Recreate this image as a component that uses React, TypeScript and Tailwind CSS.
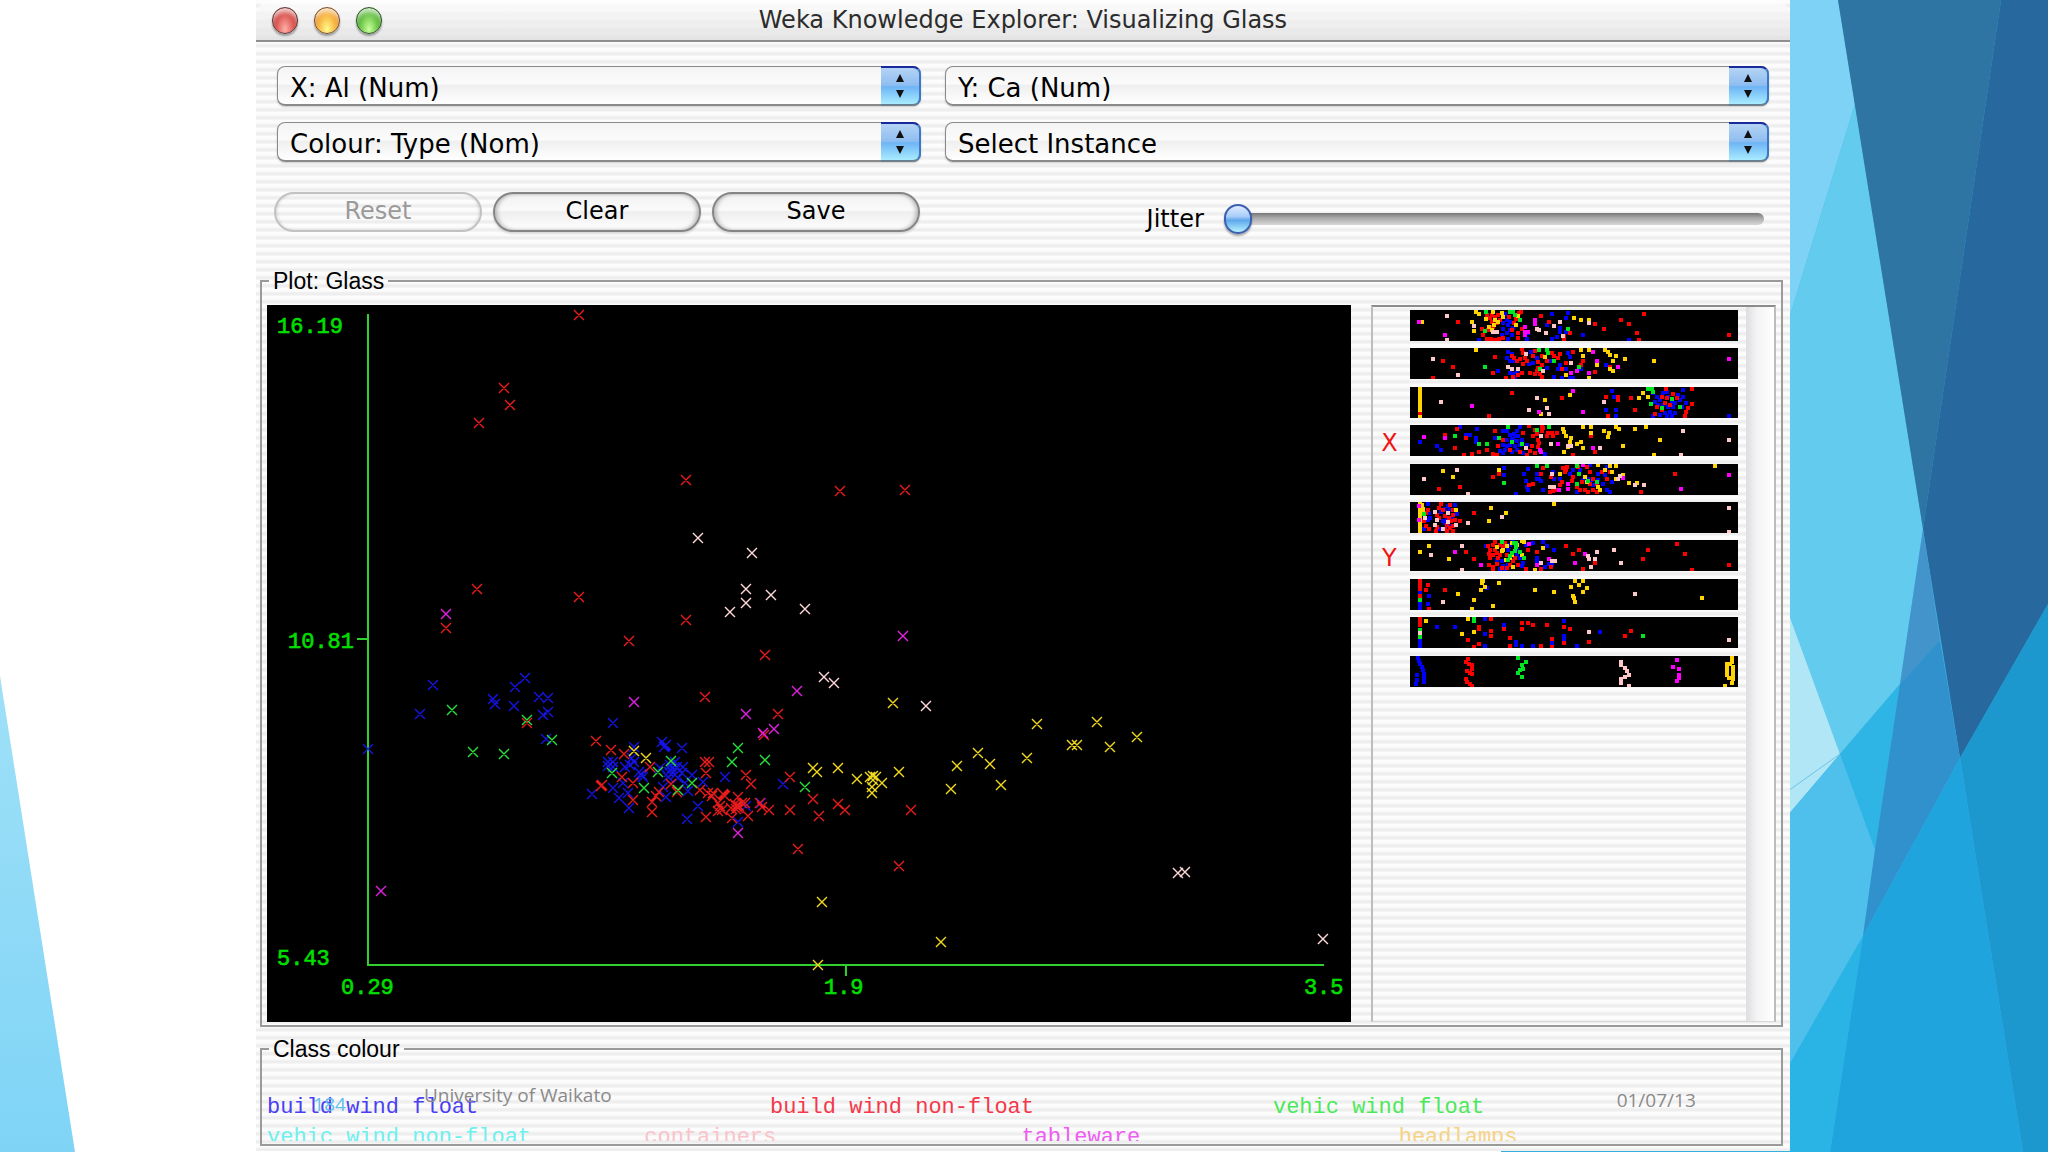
import React from "react";

type Series = { color: string; points: string };

const RED = "#e81c1c";
const BLUE = "#1414e6";
const GREEN = "#28e03c";
const MAGENTA = "#e022e0";
const YELLOW = "#f0d820";
const PINK = "#ffd8d8";

// scatter plot: Al on x, Ca on y
const plotSeries: Series[] = [
  {
    color: BLUE,
    points:
      "368,749 433,685 420,714 493,699 495,704 514,706 525,678 515,687 539,697 548,698 548,712 543,715 546,739 613,723 608,762 613,762 608,766 613,767 634,747 632,758 634,762 630,765 625,767 662,742 665,746 666,745 664,747 682,748 642,775 641,774 639,772 643,777 592,794 613,788 619,798 623,783 629,808 628,793 677,767 670,765 682,773 683,767 692,775 673,773 668,777 678,778 685,783 688,791 663,787 666,797 660,768 675,762 698,806 687,819 725,777 703,782 738,822 783,784 761,803 746,806 671,770 672,768 669,772 675,775",
  },
  {
    color: RED,
    points:
      "579,315 504,388 510,405 479,423 686,480 477,589 579,597 446,628 686,620 629,641 765,655 705,697 840,491 905,490 813,799 838,804 845,810 819,816 911,810 778,714 764,735 596,741 611,750 624,754 650,767 622,777 601,786 602,785 633,783 671,784 659,792 656,796 652,802 633,800 652,812 677,792 705,762 709,762 706,773 700,790 708,793 713,793 712,796 724,795 725,796 723,794 720,806 718,811 722,810 718,803 706,817 738,797 746,775 751,784 737,807 735,804 739,806 736,809 742,803 731,808 737,806 738,808 736,806 732,818 748,816 745,803 760,803 769,810 762,807 790,777 790,810 798,849 899,866 527,723",
  },
  {
    color: GREEN,
    points:
      "452,710 527,720 473,752 504,754 552,740 612,773 644,788 671,761 658,772 692,783 678,790 738,748 732,762 765,760 805,787",
  },
  {
    color: YELLOW,
    points:
      "893,703 1037,724 1097,722 1137,737 1110,747 1072,745 1077,745 1027,758 978,753 990,764 957,766 951,789 1001,785 899,772 857,779 870,777 876,777 873,780 873,776 882,783 872,787 872,793 813,768 817,772 838,768 822,902 941,942 818,965 634,751 646,758",
  },
  {
    color: MAGENTA,
    points: "446,614 634,702 797,691 903,636 746,714 774,729 763,733 738,833 381,891",
  },
  {
    color: PINK,
    points:
      "698,538 752,553 746,589 746,603 771,595 730,612 805,609 824,677 834,683 926,706 1178,873 1185,872 1323,939",
  },
];

// one entry per attribute, drawn top to bottom
const attributeBars: { label?: string; series: Series[] }[] = [
  {
    series: [
      { color: "#0000ff", points: "142,4 158,3 156,8 150,18 150,22 156,22 173,25 219,30 142,29 147,27 137,15 118,23 117,29 97,10 93,13 98,15 100,20 97,23 93,19 92,25 102,25 100,12 95,4 98,29 103,18 69,30" },
      { color: "#ff0000", points: "48,12 131,6 139,12 185,14 194,19 211,10 219,14 227,23 229,30 234,4 319,25 160,23 154,29 154,26 72,19 73,25 77,29 81,29 85,30 89,29 77,5 80,8 82,5 85,7 88,5 90,10 87,13 82,12 78,20 83,17 104,13 106,9 109,3 111,2 108,23 108,28 112,19 102,20 99,7 93,28" },
      { color: "#ffd400", points: "12,12 66,2 69,4 62,12 64,21 83,2 92,3 76,9 85,10 79,17 84,15 82,20 164,8 171,10 179,10 108,6 106,15 88,12 93,7" },
      { color: "#00e620", points: "76,2 75,21 100,2 103,2 105,5 110,10 158,19" },
      { color: "#ff00ff", points: "35,25 9,12 125,10 125,14 115,17 115,22 118,22 115,25" },
      { color: "#ffc8c8", points: "37,6 37,30 64,16 150,12 144,16 136,23 127,19 129,20 179,13 83,22 87,22 153,26" },
    ],
  },
  {
    series: [
      { color: "#0000ff", points: "98,4 97,10 100,13 102,6 104,13 88,23 100,25 103,26 107,24 119,16 121,4 123,15 127,10 137,20 141,13 144,29 148,21 150,17 158,5 160,9 156,21 160,30 163,30 171,21 196,17 105,30 152,30" },
      { color: "#ff0000", points: "33,13 43,19 85,9 83,25 23,30 150,6 148,10 144,8 152,21 156,15 171,17 173,13 200,19 185,24 163,4 112,1 113,5 110,11 113,16 107,13 102,8 104,10 117,13 123,8 125,3 128,14 132,17 127,23 130,26 132,29 125,26 128,20 112,25 108,27 96,30 103,29 120,25 115,10 137,13 142,5 132,8" },
      { color: "#ffd400", points: "66,2 171,2 179,2 195,2 198,4 200,7 206,8 203,13 215,11 244,13 187,17 200,21 203,23 179,30 173,8 156,27 135,9" },
      { color: "#00e620", points: "75,19 137,2 138,5 129,2 144,13 130,21 169,19" },
      { color: "#ff00ff", points: "183,4 187,13 179,25 208,19 319,11 161,25 167,23" },
      { color: "#ffc8c8", points: "23,11 48,27 98,19 102,21 108,21 161,15 133,23 116,6" },
    ],
  },
  {
    series: [
      { color: "#0000ff", points: "202,4 204,10 206,23 196,23 206,29 319,29 243,6 247,10 245,15 250,13 253,6 257,5 258,10 248,18 253,18 262,15 265,16 270,13 273,10 273,3 258,20 263,20 260,25 255,26 250,28 257,29 262,29 265,26 243,29 272,20 276,16 268,8" },
      { color: "#ff0000", points: "10,26 102,6 152,11 79,29 196,10 208,10 208,13 221,11 225,23 198,29 282,2 282,17 278,21 276,25 275,29 256,2 252,10 255,16 260,18 247,20 257,11 245,27 252,23 263,7 267,11" },
      { color: "#ffd400", points: "10,2 10,5 10,8 10,11 10,14 10,17 10,20 10,23 10,30 160,8 135,13 131,27 233,6 229,11 238,10" },
      { color: "#00e620", points: "238,2 242,2 243,5 241,17 252,21 262,12 270,20" },
      { color: "#ff00ff", points: "62,19 163,4 129,25 173,25" },
      { color: "#ffc8c8", points: "31,15 127,11 119,23 137,21 139,27 194,15" },
    ],
  },
  {
    label: "X",
    series: [
      { color: "#0000ff", points: "50,2 67,4 60,10 56,10 66,13 66,17 10,17 27,21 31,25 85,13 93,6 97,6 100,10 97,15 102,14 105,11 107,6 108,11 107,16 110,20 105,21 100,20 97,21 93,20 95,25 107,25 102,27 112,15 110,2 93,28 113,28 90,26 117,20 135,29 104,9 103,15" },
      { color: "#ff0000", points: "47,4 35,10 56,13 45,23 54,30 62,29 69,27 77,25 85,6 83,29 87,30 93,15 88,21 181,11 185,27 163,30 125,5 127,9 132,6 133,3 138,8 142,8 147,8 143,11 128,15 129,18 128,22 123,11 122,21 120,26 125,28 117,30 132,2 119,1 100,25 113,8 110,27 137,11" },
      { color: "#ffd400", points: "173,2 181,2 181,8 194,6 206,2 209,4 225,4 236,2 199,8 198,12 250,15 213,21 244,30 154,7 156,11 161,13 160,17 167,19 171,17 173,23 154,27 153,4 158,22" },
      { color: "#00e620", points: "45,11 69,19 77,19 98,2 139,2 89,13 102,17 112,19 127,5" },
      { color: "#ff00ff", points: "14,12 35,13 148,19 130,25 131,27 183,23" },
      { color: "#ffc8c8", points: "273,6 319,15 271,30 141,19 116,23 131,11 158,21 161,21 190,23" },
    ],
  },
  {
    series: [
      { color: "#0000ff", points: "94,4 94,11 127,10 114,10 118,5 116,17 129,15 131,17 133,26 118,26 106,30 117,23 127,15 144,15 150,15 160,10 163,6 170,6 173,16 178,15 182,16 180,1 188,10 188,16 193,20 197,26 195,11 200,28 183,21 167,28 202,18 197,3 143,8" },
      { color: "#ff0000", points: "29,25 50,23 83,13 89,10 133,4 131,10 265,10 231,28 141,13 153,4 157,3 156,6 152,18 150,21 147,26 143,27 140,28 163,13 162,17 167,23 170,26 175,26 178,28 172,18 177,3 180,8 183,15 187,20 180,20 183,26 192,8 197,15 200,8 168,3 123,20 119,21 155,8 187,28" },
      { color: "#ffd400", points: "33,7 43,13 89,6 305,2 188,1 195,6 200,2 206,2 202,8 213,11 219,19 227,19 206,15 188,23 190,26 150,10 175,13 177,18" },
      { color: "#00e620", points: "94,19 127,2 137,2 167,2 169,10 167,20 178,17 187,18" },
      { color: "#ff00ff", points: "319,11 271,25 158,25 149,26 213,14 173,1 158,20" },
      { color: "#ffc8c8", points: "14,15 47,6 58,30 142,10 234,21 210,12 225,21 140,23 144,23 208,15" },
    ],
  },
  {
    series: [
      { color: "#0000ff", points: "18,2 19,11 18,18 20,16 38,4 35,7 40,8 33,19 31,10 37,17 42,16 47,12 35,21 39,24 14,27 29,27 45,3" },
      { color: "#ff0000", points: "64,11 50,19 16,11 18,8 14,19 16,24 19,27 31,2 29,6 27,13 29,16 35,14 40,3 43,8 39,16 43,13 45,18 41,19 37,23 35,27 40,26 43,24 43,29 26,29 27,25 37,29 33,8" },
      { color: "#ffd400", points: "10,2 10,6 13,10 10,10 10,14 10,18 10,22 10,26 10,29 12,3 13,7 46,8 81,6 96,11 79,19 144,2" },
      { color: "#00e620", points: "14,12" },
      { color: "#ff00ff", points: "9,4 9,18" },
      { color: "#ffc8c8", points: "92,15 58,21 319,6 319,30 25,10 27,18 25,23 38,11 38,20 46,23 15,16 33,27" },
    ],
  },
  {
    label: "Y",
    series: [
      { color: "#0000ff", points: "76,6 133,2 137,6 144,10 127,18 127,21 139,24 135,27 142,25 123,3 116,5 87,20 92,21 98,25 93,26 100,5 107,10 110,18 112,26 90,29 107,15 113,23 98,10 103,2 95,29" },
      { color: "#ff0000", points: "56,12 64,19 156,6 163,14 169,10 238,10 233,19 267,4 275,14 282,30 319,25 173,29 185,23 116,29 131,29 118,10 127,12 141,27 78,6 80,10 79,14 80,18 83,5 85,10 83,15 87,13 90,15 88,18 85,2 90,5 93,7 79,25 83,27 87,24 92,28 97,28 100,25 105,18 108,25 97,15 95,3 83,29 103,21" },
      { color: "#ffd400", points: "19,6 10,12 39,19 133,8 112,1 114,2 102,3 93,10 97,6 96,20 102,15 100,18 103,27 92,11 107,5 112,15 125,30 87,7" },
      { color: "#00e620", points: "92,2 104,3 106,7 105,11 102,13 110,12 100,16 114,18 98,20 106,3" },
      { color: "#ff00ff", points: "45,12 71,25 119,4 165,23 175,14 139,19 127,25" },
      { color: "#ffc8c8", points: "52,6 21,15 52,30 204,10 211,23 187,12 185,19 179,19 181,27 131,23 142,21 145,21 178,16" },
    ],
  },
  {
    series: [
      { color: "#0000ff", points: "10,14 10,25 10,29 19,17 18,25 77,9" },
      { color: "#ff0000", points: "10,2 10,6 10,10 10,17 18,6 16,11 35,11 19,30" },
      { color: "#ffd400", points: "72,2 72,4 73,2 75,8 71,11 89,4 48,15 64,21 83,27 62,30 125,11 144,13 165,2 173,2 169,6 161,8 177,9 173,13 163,17 164,19 165,23 292,19" },
      { color: "#00e620", points: "10,21" },
      { color: "#ffc8c8", points: "33,23 225,15" },
    ],
  },
  {
    series: [
      { color: "#0000ff", points: "10,23 10,26 10,30 27,10 45,10 75,2 75,17 94,8 75,29 106,25 106,28 112,29 123,29 142,26 154,4 154,19 154,22 167,29 190,15" },
      { color: "#ff0000", points: "10,2 10,6 10,8 10,19 81,2 69,10 69,12 81,14 81,19 58,23 100,21 100,29 69,27 64,30 94,12 112,6 118,6 112,12 123,8 137,8 154,10 160,12 131,29 142,22 142,30 179,25 215,19 221,14 154,26" },
      { color: "#ffd400", points: "16,4 58,2 52,17 64,15" },
      { color: "#00e620", points: "10,13 10,20 64,2 64,4 233,19" },
      { color: "#ffc8c8", points: "10,16 179,15 319,23" },
    ],
  },
  {
    series: [
      { color: "#0000ff", points: "8,2 9,5 10,8 12,11 13,14 14,18 14,22 14,26 7,19 7,24 6,28" },
      { color: "#ff0000", points: "58,3 56,6 59,8 62,9 62,13 57,15 60,17 62,18 56,23 57,26 60,28 62,30" },
      { color: "#ffd400", points: "322,2 322,6 320,8 323,11 323,15 323,19 323,23 322,27 317,8 317,11 317,15 317,19 319,22 315,30" },
      { color: "#00e620", points: "108,2 116,6 112,9 113,13 110,14 108,17 112,21" },
      { color: "#ff00ff", points: "267,4 263,11 269,13 269,19 269,22 267,25" },
      { color: "#ffc8c8", points: "211,6 211,9 215,12 217,15 219,19 215,21 211,23 211,27 219,30" },
    ],
  },
];

const crossPath = (points: string) =>
  points
    .split(" ")
    .map((p) => {
      const [x, y] = p.split(",").map(Number);
      return `M${x - 5} ${y - 5}l10 10M${x - 5} ${y + 5}l10 -10`;
    })
    .join("");

const squarePath = (points: string) =>
  points
    .split(" ")
    .map((p) => {
      const [x, y] = p.split(",").map(Number);
      return `M${x - 2} ${y - 2}h4v4h-4z`;
    })
    .join("");

const SlideBackground = () => (
  <svg
    className="absolute inset-0 h-full w-full"
    viewBox="0 0 2048 1152"
    preserveAspectRatio="none"
    aria-hidden="true"
  >
    <defs>
      <linearGradient id="wedge" x1="0" y1="0" x2="0" y2="1">
        <stop offset="0" stopColor="#9fe0f8" />
        <stop offset="1" stopColor="#7fd4f6" />
      </linearGradient>
    </defs>
    <polygon points="0,676 75,1152 0,1152" fill="url(#wedge)" />
    <polygon points="1501,1149 1790,1149 1790,1152 1501,1152" fill="#35b0dc" />
    <rect x="1788" y="0" width="260" height="1152" fill="#3fb4e4" />
    <polygon points="1788,0 1838,0 1855,104 1788,322" fill="#7dd2f5" />
    <polygon points="1855,104 1923,529 1900,684 1840,754 1788,612 1788,322" fill="#63cbee" />
    <polygon points="1788,612 1840,754 1788,815" fill="#b1e6f7" />
    <path d="M1788 791L1840 754" stroke="#6cc6e2" strokeWidth="1" />
    <polygon points="1840,754 1900,684 1875,850" fill="#2eb5e6" />
    <polygon points="1788,815 1840,754 1875,850 1863,936 1788,1067" fill="#4fc0ec" />
    <polygon points="1838,0 2001,0 1923,529" fill="#2f75a3" />
    <polygon points="2001,0 2048,0 2048,604 1960,758 1923,529" fill="#27699e" />
    <polygon points="1923,529 1940,640 1900,684" fill="#4494cc" />
    <polygon points="1940,640 1960,758 1863,936 1875,850 1900,684" fill="#3191cd" />
    <polygon points="2048,604 2048,1152 2023,1152 1960,758" fill="#1d98ce" />
    <polygon points="1960,758 2023,1152 1830,1152 1863,936" fill="#20a4de" />
    <polygon points="1863,936 1830,1152 1788,1152 1788,1067" fill="#2ab4e6" />
  </svg>
);

const TitleBar = () => (
  <header className="grid h-[42px] grid-cols-[1fr_auto_1fr] items-center rounded-t-2xl border-b-2 border-[#8e8e8e] bg-[linear-gradient(to_bottom,#ffffffcc,#dfe0dfcc)] px-4">
    <div className="flex gap-4">
      <button
        aria-label="Close"
        className="h-[27px] w-[26px] rounded-full border border-[#5c3a3a] bg-[radial-gradient(ellipse_at_50%_85%,#ffb0a8,#dd5a55_50%,#a83232)] shadow-[inset_0_5px_4px_-1px_#ffffffbb,0_2px_2px_#0005]"
      />
      <button
        aria-label="Minimize"
        className="h-[27px] w-[26px] rounded-full border border-[#7a5130] bg-[radial-gradient(ellipse_at_50%_85%,#fffb8c,#f6ae3c_55%,#c9681d)] shadow-[inset_0_5px_4px_-1px_#ffffffbb,0_2px_2px_#0005]"
      />
      <button
        aria-label="Zoom"
        className="h-[27px] w-[26px] rounded-full border border-[#2f5526] bg-[radial-gradient(ellipse_at_50%_85%,#c9ff9a,#66c043_55%,#2f8420)] shadow-[inset_0_5px_4px_-1px_#ffffffbb,0_2px_2px_#0005]"
      />
    </div>
    <h1 className="text-2xl leading-8 text-[#2c2c2c]">
      Weka Knowledge Explorer: Visualizing Glass
    </h1>
  </header>
);

const PopupMenu = ({ name, value }: { name: string; value: string }) => (
  <div className="relative h-10">
    <select
      aria-label={name}
      defaultValue={value}
      className="h-full w-full appearance-none rounded-lg border border-b-2 border-[#8a8a8a] bg-[linear-gradient(to_bottom,#f4f4f4,#fbfbfb_45%,#efefef_50%,#ffffff)] pt-1 pl-3 text-[26px] leading-8 text-black shadow-[0_1px_2px_#0003]"
    >
      <option>{value}</option>
    </select>
    <span className="pointer-events-none absolute inset-y-0 right-0 flex w-10 items-center justify-center rounded-r-lg border-t-2 border-r-2 border-b-2 border-t-[#1a2a9c] border-r-[#3a78c8] border-b-[#6a8090] bg-[linear-gradient(to_bottom,#b4d3f4,#8fbdf0_48%,#6eb4f5_52%,#a8ecff)]">
      <svg width="10" height="26" viewBox="0 0 10 26" aria-hidden="true">
        <path d="M5 1L9 9H1zM5 25L1 17H9z" fill="#111" />
      </svg>
    </span>
  </div>
);

const PushButton = ({ label, disabled }: { label: string; disabled?: boolean }) => (
  <button
    disabled={disabled}
    className="h-10 flex-1 rounded-full border-2 border-[#858585] bg-[linear-gradient(to_bottom,#f2f2f2,#fafafa_45%,#eeeeee_50%,#ffffff)] pb-0.5 text-2xl leading-8 text-black shadow-[inset_3px_0_4px_-1px_#0004,inset_-3px_0_4px_-1px_#0004,0_2px_2px_#0002] disabled:border-[#c2c2c2] disabled:bg-none disabled:text-[#9a9a9a] disabled:shadow-[inset_2px_0_3px_-1px_#0002,inset_-2px_0_3px_-1px_#0002]"
  >
    {label}
  </button>
);

const Controls = () => (
  <>
    <div className="grid grid-cols-[644fr_824fr] gap-x-6 gap-y-4 px-[21px] pt-6">
      <PopupMenu name="X axis" value="X: Al (Num)" />
      <PopupMenu name="Y axis" value="Y: Ca (Num)" />
      <PopupMenu name="Colour" value="Colour: Type (Nom)" />
      <PopupMenu name="Instance" value="Select Instance" />
    </div>
    <div className="grid grid-cols-[646fr_844fr] pt-[30px] pr-[26px] pl-[18px]">
      <div className="flex gap-[11px]">
        <PushButton label="Reset" disabled />
        <PushButton label="Clear" />
        <PushButton label="Save" />
      </div>
      <div className="flex items-center justify-end gap-5 pt-3">
        <label htmlFor="jitter" className="text-2xl leading-7 text-black">
          Jitter
        </label>
        <input
          id="jitter"
          type="range"
          min="0"
          max="100"
          defaultValue="0"
          className="h-[30px] w-[64%] appearance-none bg-transparent [&::-webkit-slider-runnable-track]:h-3 [&::-webkit-slider-runnable-track]:rounded-full [&::-webkit-slider-runnable-track]:bg-[linear-gradient(to_bottom,#777777,#a8a8a8_40%,#d8d8d8)] [&::-webkit-slider-thumb]:-mt-[9px] [&::-webkit-slider-thumb]:h-[30px] [&::-webkit-slider-thumb]:w-7 [&::-webkit-slider-thumb]:appearance-none [&::-webkit-slider-thumb]:rounded-full [&::-webkit-slider-thumb]:border-2 [&::-webkit-slider-thumb]:border-[#3c5fb0] [&::-webkit-slider-thumb]:bg-[linear-gradient(to_bottom,#dcebff,#a9cdf8_40%,#5ea6ec_55%,#b5f2ff)] [&::-webkit-slider-thumb]:shadow-[0_2px_2px_#0005]"
        />
      </div>
    </div>
  </>
);

const Plot = () => (
  <svg className="block w-full bg-black" viewBox="267 305 1084 717" role="img" aria-label="Al against Ca">
    <g stroke="#2fd02f" strokeWidth="2" fill="none">
      <path d="M368 314V965H1324" />
      <path d="M357 639H368M846 965V976" />
    </g>
    <g
      fill="#00e000"
      stroke="#00e000"
      strokeWidth="0.6"
      className="font-['Liberation_Mono',monospace] text-[22px]"
    >
      <text x="277" y="333">16.19</text>
      <text x="288" y="648">10.81</text>
      <text x="277" y="965">5.43</text>
      <text x="341" y="994">0.29</text>
      <text x="824" y="994">1.9</text>
      <text x="1304" y="994">3.5</text>
    </g>
    {plotSeries.map((s) => (
      <path key={s.color} d={crossPath(s.points)} stroke={s.color} strokeWidth="1.4" fill="none" />
    ))}
  </svg>
);

const AttributeBars = () => (
  <div className="flex h-full border-t-2 border-r-2 border-b border-l-2 border-[#bdbdbd] border-t-[#8c8c8c] border-b-[#d8d8d8]">
    <ul className="grid h-[387px] flex-1 grid-rows-10 pt-[3px] pr-2">
      {attributeBars.map((bar, i) => (
        <li key={i} className="flex items-start">
          <span className="w-[37px] pr-1 text-center text-2xl leading-9 text-[#f01414]">{bar.label}</span>
          <svg
            className="h-[31px] flex-1 bg-black"
            viewBox="0 0 328 31"
            preserveAspectRatio="none"
            shapeRendering="crispEdges"
            aria-hidden="true"
          >
            {bar.series.map((s) => (
              <path key={s.color} d={squarePath(s.points)} fill={s.color} />
            ))}
          </svg>
        </li>
      ))}
    </ul>
    <div className="w-7 bg-[linear-gradient(to_right,#dededf,#f4f3f5_40%,#ffffff)]" />
  </div>
);

const ClassColours = () => (
  <div className="h-12 overflow-hidden font-['Liberation_Mono',monospace] text-[22px] leading-[30px]">
    <div className="grid grid-cols-3">
      <span className="text-[#4a3ff2]">build wind float</span>
      <span className="text-[#f4384a]">build wind non-float</span>
      <span className="text-[#4be95a]">vehic wind float</span>
    </div>
    <div className="grid grid-cols-4">
      <span className="text-[#6df0ee]">vehic wind non-float</span>
      <span className="text-[#f9c3ca]">containers</span>
      <span className="text-[#ec5cf0]">tableware</span>
      <span className="text-[#f5d384]">headlamps</span>
    </div>
  </div>
);

const App = () => {
  return (
    <main className="relative min-h-screen overflow-hidden bg-white font-['DejaVu_Sans',sans-serif]">
      <SlideBackground />

      <section className="relative ml-[12.5%] w-[74.9%] bg-[repeating-linear-gradient(to_bottom,#fdfcfd_0px,#fdfcfd_3px,#efeeef_5px,#efeeef_7px,#fdfcfd_8px)] pb-[5px]">
        <TitleBar />
        <Controls />

        <fieldset className="mt-[35px] mr-[7px] ml-1 border-2 border-[#9a9a9a] px-[5px] pt-3 pb-[3px]">
          <legend className="ml-0.5 px-1 font-['Liberation_Sans',sans-serif] text-[23px] leading-6 text-black">
            Plot: Glass
          </legend>
          <div className="grid grid-cols-[1084fr_405fr] gap-5">
            <Plot />
            <AttributeBars />
          </div>
        </fieldset>

        <fieldset className="mt-[10px] mr-[7px] ml-1 border-2 border-[#9a9a9a] px-[5px] pt-8 pb-[3px]">
          <legend className="ml-0.5 px-1 font-['Liberation_Sans',sans-serif] text-[23px] leading-6 text-black">
            Class colour
          </legend>
          <ClassColours />
        </fieldset>
      </section>

      {/* slide footer, printed over the window */}
      <footer className="font-['Open_Sans',sans-serif] text-[19px] leading-6 text-[#8a8a8a]">
        <span className="absolute bottom-9 left-[15.3%] text-[#5fbfee]">184</span>
        <span className="absolute bottom-[45px] left-[20.7%]">University of Waikato</span>
        <span className="absolute right-[17.2%] bottom-10">01/07/13</span>
      </footer>
    </main>
  );
};

export default App;
